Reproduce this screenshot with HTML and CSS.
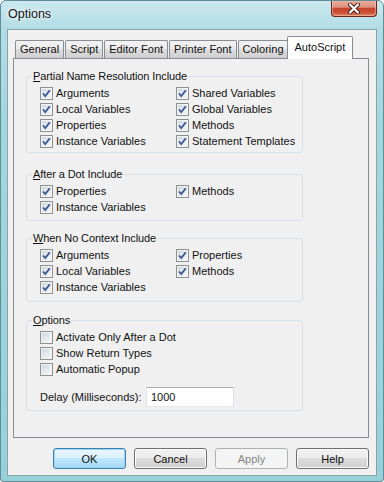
FILE: index.html
```html
<!DOCTYPE html>
<html lang="en">
<head>
    <meta charset="UTF-8">
    <title>Options</title>
    <link rel="stylesheet" href="styles.css">
</head>
<body>
    <div class="window">
        <div class="titlebar">
            <span class="title">Options</span>
            <div class="close">
                <svg width="12" height="11" viewBox="0 0 12 11">
                    <path d="M2 1.5 L10 9.5 M10 1.5 L2 9.5" stroke="#4a1a12" stroke-width="4" stroke-linecap="round"/>
                    <path d="M2 1.5 L10 9.5 M10 1.5 L2 9.5" stroke="#fff" stroke-width="2.2" stroke-linecap="round"/>
                </svg>
            </div>
        </div>

        <div class="client">
            <div class="tabs">
                <div class="tab">General</div>
                <div class="tab">Script</div>
                <div class="tab">Editor Font</div>
                <div class="tab">Printer Font</div>
                <div class="tab">Coloring</div>
                <div class="tab active">AutoScript</div>
            </div>

            <div class="panel">
                <fieldset class="group g1">
                    <legend><u>P</u>artial Name Resolution Include</legend>
                    <div class="opts">
                        <div class="check"><span class="box"><svg width="11" height="11" viewBox="0 0 11 11"><path d="M2 5.5 L4.3 8 L8.8 2.2" fill="none" stroke="#3d5494" stroke-width="1.8"/></svg></span>Arguments</div>
                        <div class="check"><span class="box"><svg width="11" height="11" viewBox="0 0 11 11"><path d="M2 5.5 L4.3 8 L8.8 2.2" fill="none" stroke="#3d5494" stroke-width="1.8"/></svg></span>Shared Variables</div>
                        <div class="check"><span class="box"><svg width="11" height="11" viewBox="0 0 11 11"><path d="M2 5.5 L4.3 8 L8.8 2.2" fill="none" stroke="#3d5494" stroke-width="1.8"/></svg></span>Local Variables</div>
                        <div class="check"><span class="box"><svg width="11" height="11" viewBox="0 0 11 11"><path d="M2 5.5 L4.3 8 L8.8 2.2" fill="none" stroke="#3d5494" stroke-width="1.8"/></svg></span>Global Variables</div>
                        <div class="check"><span class="box"><svg width="11" height="11" viewBox="0 0 11 11"><path d="M2 5.5 L4.3 8 L8.8 2.2" fill="none" stroke="#3d5494" stroke-width="1.8"/></svg></span>Properties</div>
                        <div class="check"><span class="box"><svg width="11" height="11" viewBox="0 0 11 11"><path d="M2 5.5 L4.3 8 L8.8 2.2" fill="none" stroke="#3d5494" stroke-width="1.8"/></svg></span>Methods</div>
                        <div class="check"><span class="box"><svg width="11" height="11" viewBox="0 0 11 11"><path d="M2 5.5 L4.3 8 L8.8 2.2" fill="none" stroke="#3d5494" stroke-width="1.8"/></svg></span>Instance Variables</div>
                        <div class="check"><span class="box"><svg width="11" height="11" viewBox="0 0 11 11"><path d="M2 5.5 L4.3 8 L8.8 2.2" fill="none" stroke="#3d5494" stroke-width="1.8"/></svg></span>Statement Templates</div>
                    </div>
                </fieldset>

                <fieldset class="group g2">
                    <legend><u>A</u>fter a Dot Include</legend>
                    <div class="opts">
                        <div class="check"><span class="box"><svg width="11" height="11" viewBox="0 0 11 11"><path d="M2 5.5 L4.3 8 L8.8 2.2" fill="none" stroke="#3d5494" stroke-width="1.8"/></svg></span>Properties</div>
                        <div class="check"><span class="box"><svg width="11" height="11" viewBox="0 0 11 11"><path d="M2 5.5 L4.3 8 L8.8 2.2" fill="none" stroke="#3d5494" stroke-width="1.8"/></svg></span>Methods</div>
                        <div class="check"><span class="box"><svg width="11" height="11" viewBox="0 0 11 11"><path d="M2 5.5 L4.3 8 L8.8 2.2" fill="none" stroke="#3d5494" stroke-width="1.8"/></svg></span>Instance Variables</div>
                    </div>
                </fieldset>

                <fieldset class="group g3">
                    <legend><u>W</u>hen No Context Include</legend>
                    <div class="opts">
                        <div class="check"><span class="box"><svg width="11" height="11" viewBox="0 0 11 11"><path d="M2 5.5 L4.3 8 L8.8 2.2" fill="none" stroke="#3d5494" stroke-width="1.8"/></svg></span>Arguments</div>
                        <div class="check"><span class="box"><svg width="11" height="11" viewBox="0 0 11 11"><path d="M2 5.5 L4.3 8 L8.8 2.2" fill="none" stroke="#3d5494" stroke-width="1.8"/></svg></span>Properties</div>
                        <div class="check"><span class="box"><svg width="11" height="11" viewBox="0 0 11 11"><path d="M2 5.5 L4.3 8 L8.8 2.2" fill="none" stroke="#3d5494" stroke-width="1.8"/></svg></span>Local Variables</div>
                        <div class="check"><span class="box"><svg width="11" height="11" viewBox="0 0 11 11"><path d="M2 5.5 L4.3 8 L8.8 2.2" fill="none" stroke="#3d5494" stroke-width="1.8"/></svg></span>Methods</div>
                        <div class="check"><span class="box"><svg width="11" height="11" viewBox="0 0 11 11"><path d="M2 5.5 L4.3 8 L8.8 2.2" fill="none" stroke="#3d5494" stroke-width="1.8"/></svg></span>Instance Variables</div>
                    </div>
                </fieldset>

                <fieldset class="group g4">
                    <legend><u>O</u>ptions</legend>
                    <div class="opts single">
                        <div class="check"><span class="box"></span>Activate Only After a Dot</div>
                        <div class="check"><span class="box"></span>Show Return Types</div>
                        <div class="check"><span class="box"></span>Automatic Popup</div>
                    </div>
                    <div class="delay">
                        <span class="delay-label">Delay (Milliseconds):</span>
                        <div class="textbox">1000</div>
                    </div>
                </fieldset>
            </div>

            <div class="buttons">
                <button class="default">OK</button>
                <button>Cancel</button>
                <button class="disabled">Apply</button>
                <button>Help</button>
            </div>
        </div>
    </div>
</body>
</html>
```

FILE: styles.css
```css
body {
    margin: 0;
    font-family: "Liberation Sans", Arial, sans-serif;
    font-size: 11px;
    color: #111;
}

.window {
    width: 384px;
    height: 482px;
    box-sizing: border-box;
    display: flex;
    flex-direction: column;
    border: 1px solid #5f8e98;
    border-radius: 6px 6px 3px 3px;
    background: linear-gradient(#cbe8ee 0px, #b2dde5 28px, #a4d6df 120px, #98d0da 482px);
    overflow: hidden;
}

.titlebar {
    height: 28px;
    display: flex;
    justify-content: space-between;
    align-items: flex-start;
    flex: none;
}

.title {
    padding: 5px 0 0 7px;
    font-size: 12.5px;
    line-height: 16px;
    text-shadow: 0 0 6px #fff, 0 0 3px #fff;
}

.close {
    width: 46px;
    height: 17px;
    margin: -1px 6px 0 0;
    box-sizing: border-box;
    border: 1px solid #6d2418;
    border-top: 0;
    border-radius: 0 0 4px 4px;
    background: linear-gradient(#eab2a4 0%, #de8f7c 45%, #c6462f 52%, #c94c34 75%, #e0805f 100%);
    box-shadow: inset 0 0 0 1px rgba(255, 220, 210, 0.45);
    display: flex;
    align-items: center;
    justify-content: center;
}

.client {
    height: 447px;
    margin: 0 6px;
    box-sizing: border-box;
    border: 1px solid #8aa4ab;
    background: #f0f0f0;
    display: flex;
    flex-direction: column;
    flex: none;
}

.tabs {
    display: flex;
    align-items: flex-end;
    padding: 6px 0 0 7px;
    height: 22px;
}

.tab {
    height: 17px;
    line-height: 17px;
    padding: 0 4px;
    border: 1px solid #898c95;
    border-bottom: 0;
    border-radius: 2px 2px 0 0;
    margin-right: 1px;
    background: linear-gradient(#f2f2f2 0%, #ebebeb 50%, #dddddd 50%, #cfcfcf 100%);
}

.tab.active {
    position: relative;
    height: 22px;
    line-height: 20px;
    padding: 0 7px;
    margin: 0 0 -1px -3px;
    background: #fff;
}

.panel {
    height: 380px;
    box-sizing: border-box;
    margin: 0 7px 0 5px;
    padding: 10px 0 0 12px;
    border: 1px solid #898c95;
    background: #f0f0f0;
}

.group {
    width: 277px;
    box-sizing: border-box;
    margin: 0;
    padding: 2px 5px 3px;
    min-inline-size: 0;
    border: 1px solid #d5dfe5;
    border-radius: 3px;
}

.group legend {
    padding: 0 1px;
    line-height: 14px;
    letter-spacing: -0.1px;
}

.g2 {
    margin-top: 14px;
    padding-bottom: 5px;
}

.g3 {
    margin-top: 10px;
    padding-bottom: 6px;
}

.g4 {
    margin-top: 11px;
}

.opts {
    display: grid;
    grid-template-columns: 136px auto;
    grid-auto-rows: 16px;
    margin-left: 8px;
}

.opts.single {
    grid-template-columns: auto;
}

.check {
    display: flex;
    align-items: center;
    white-space: nowrap;
}

.box {
    width: 13px;
    height: 13px;
    box-sizing: border-box;
    margin-right: 3px;
    border: 1px solid #8e8f8f;
    background: linear-gradient(135deg, #cbd3dd 0%, #e6eaef 55%, #f8f8f8 100%);
    box-shadow: inset 0 0 0 1px #f4f4f4;
    flex: none;
}

.box svg {
    display: block;
}

.delay {
    display: flex;
    align-items: center;
    margin: 10px 0 0 8px;
}

.delay-label {
    width: 106px;
}

.textbox {
    width: 88px;
    height: 20px;
    box-sizing: border-box;
    border: 1px solid;
    border-color: #abadb3 #dbdfe6 #e3e9ef #e2e3ea;
    background: #fff;
    padding-left: 4px;
    line-height: 18px;
}

.buttons {
    display: flex;
    justify-content: flex-end;
    gap: 8px;
    margin: 10px 7px 0 0;
}

button {
    width: 73px;
    height: 21px;
    padding: 0;
    font-family: inherit;
    font-size: 11px;
    color: #111;
    border: 1px solid #707070;
    border-radius: 3px;
    background: linear-gradient(#f2f2f2 0%, #ebebeb 50%, #dddddd 50%, #cfcfcf 100%);
    box-shadow: inset 0 0 0 1px #fbfbfb;
}

button.default {
    border-color: #3c7fb1;
    background: linear-gradient(#eaf6fd 0%, #d9f0fc 50%, #bee6fd 50%, #a7d9f5 100%);
    box-shadow: inset 0 0 0 1px #9bd4f4;
}

button.disabled {
    border-color: #adb2b5;
    background: #f4f4f4;
    box-shadow: none;
    color: #838383;
}
```
